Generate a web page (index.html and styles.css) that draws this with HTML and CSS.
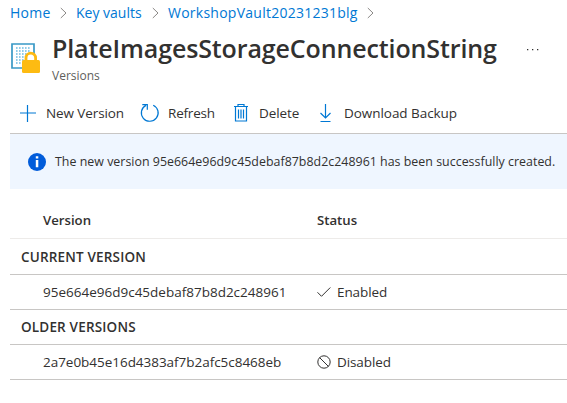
FILE: index.html
```html
<!DOCTYPE html>
<html lang="en">
<head>
<meta charset="utf-8">
<title>PlateImagesStorageConnectionString</title>
<link rel="stylesheet" href="styles.css">
</head>
<body>
<nav class="crumbs">
  <a class="home">Home</a>
  <svg width="7" height="12" viewBox="0 0 7 12"><path d="M.8 1 6 6 .8 11"/></svg>
  <a class="vaults">Key vaults</a>
  <svg width="7" height="12" viewBox="0 0 7 12"><path d="M.8 1 6 6 .8 11"/></svg>
  <a class="vault">WorkshopVault20231231blg</a>
  <svg width="7" height="12" viewBox="0 0 7 12"><path d="M.8 1 6 6 .8 11"/></svg>
</nav>
<header class="heading">
  <svg class="logo" width="30" height="32" viewBox="0 0 30 32">
    <path d="M2 2h22v24H2z" fill="#fff" stroke="#3999c6" stroke-width="1.7"/>
    <path d="M6 6h15M6 9h15M6 12h15M6 15h15M6 18h15M6 21h15" stroke="#6dbbe2" stroke-width="1.4" stroke-dasharray="1.6 1.4" fill="none"/>
    <path d="M16 19v-3a4.8 4.8 0 0 1 9.6 0v3" fill="#fff" stroke="#fdb913" stroke-width="2.8"/>
    <rect x="12" y="18" width="18" height="13" rx="1.5" fill="#fdbb12"/>
  </svg>
  <div class="titles">
    <h1>PlateImagesStorageConnectionString</h1>
    <p>Versions</p>
  </div>
  <svg class="more" width="13" height="3" viewBox="0 0 13 3"><path d="M1 1h1.3v1.3H1zM6 1h1.3v1.3H6zM11 1h1.3v1.3H11z" fill="#323130"/></svg>
</header>
<div class="toolbar">
  <button class="new"><svg width="18" height="18" viewBox="0 0 18 18"><path d="M1 9h16M8.5 1v17"/></svg><span>New Version</span></button>
  <button class="refresh"><svg width="20" height="20" viewBox="0 0 20 20"><path d="M13.2 2.2a8.4 8.4 0 1 1-7.3.2M2.3 1.7h5v5"/></svg><span>Refresh</span></button>
  <button class="delete"><svg width="16" height="20" viewBox="0 0 16 20"><path d="M1 3.5h14M5 3V1.5h6V3M2.5 4v14h11V4M5.5 6.5v9M8 6.5v9M10.5 6.5v9"/></svg><span>Delete</span></button>
  <button class="download"><svg width="12" height="20" viewBox="0 0 12 20"><path d="M6.5 1v14M1.5 10l5 5 5-5M1.5 18.5h10"/></svg><span>Download Backup</span></button>
</div>
<div class="notice">
  <svg width="18" height="18" viewBox="0 0 18 18"><circle cx="9" cy="9" r="9" fill="#015cda"/><path d="M7.8 3.3h2.5v2.3H7.8zM7.8 7h2.5v7.3H7.8z" fill="#fff"/></svg>
  <span>The new version 95e664e96d9c45debaf87b8d2c248961 has been successfully created.</span>
</div>
<div class="table">
  <div class="row head"><span class="cell"><b>Version</b></span><b>Status</b></div>
  <div class="group current"><span>CURRENT VERSION</span></div>
  <div class="row"><span class="cell">95e664e96d9c45debaf87b8d2c248961</span><svg width="14" height="14" viewBox="0 0 14 14"><path d="m.5 7.3 4 4L13.3 2.5"/></svg><span class="state">Enabled</span></div>
  <div class="group"><span>OLDER VERSIONS</span></div>
  <div class="row"><span class="cell older-id">2a7e0b45e16d4383af7b2afc5c8468eb</span><svg width="14" height="14" viewBox="0 0 14 14"><circle cx="7" cy="7" r="6.2"/><path d="m2.5 2.5 9 9"/></svg><span class="state">Disabled</span></div>
</div>
</body>
</html>
```
FILE: styles.css
```css
* { box-sizing: border-box; }
body {
  margin: 0;
  height: 403px;
  overflow: hidden;
  padding-left: 10px;
  background: #fff;
  color: #323130;
  font: 13.5px/18px "Open Sans", "Noto Sans", sans-serif;
  white-space: nowrap;
}
svg { display: block; flex: none; fill: none; }
.crumbs { display: flex; align-items: center; height: 26px; color: #0078d4; font-size: 14px; }
.crumbs svg { stroke: #8a8886; margin: 0 9px; }
.home { width: 41px; letter-spacing: .3px; }
.vaults { width: 67px; }
.vault { width: 190px; letter-spacing: .25px; }
.heading { display: flex; height: 66px; }
.logo { margin-top: 16px; }
.titles { width: 445px; margin: 4px 0 0 12px; }
h1 { margin: 0; font-size: 25px; line-height: 36px; font-weight: 600; letter-spacing: -.12px; }
p { margin: 1px 0 0; font-size: 12px; line-height: 17px; color: #605e5c; }
.more { margin: 22px 0 0 29px; }
.toolbar { display: flex; height: 42px; border-bottom: 1px solid #c8c6c4; padding-left: 9px; }
button { display: flex; align-items: center; height: 42px; padding: 0; border: 0; background: none; color: inherit; font: inherit; }
button svg { stroke: #0078d4; stroke-width: 1.2; }
.new { width: 121px; gap: 9px; letter-spacing: -.1px; }
.refresh { width: 93px; gap: 8px; letter-spacing: -.2px; }
.delete { width: 86px; gap: 10px; letter-spacing: -.1px; }
.download { gap: 13px; letter-spacing: -.05px; }
.notice { display: flex; align-items: center; height: 55px; background: #eff6ff; padding-left: 18px; gap: 9px; font-size: 12.4px; letter-spacing: .02px; }
.table { padding-top: 12px; }
.row, .group { display: flex; align-items: center; height: 35px; border-bottom: 1px solid #c8c6c4; }
.row svg { stroke: #323130; margin-right: 6px; }
.head { height: 38px; border-color: #edebe9; }
.cell { width: 307px; padding-left: 33px; }
.older-id { letter-spacing: -.03px; }
.state { letter-spacing: -.1px; }
b, .group { font-weight: 600; }
b { font-size: 13.2px; }
.group { padding-left: 11px; letter-spacing: .18px; }
.current { height: 36px; }
```
